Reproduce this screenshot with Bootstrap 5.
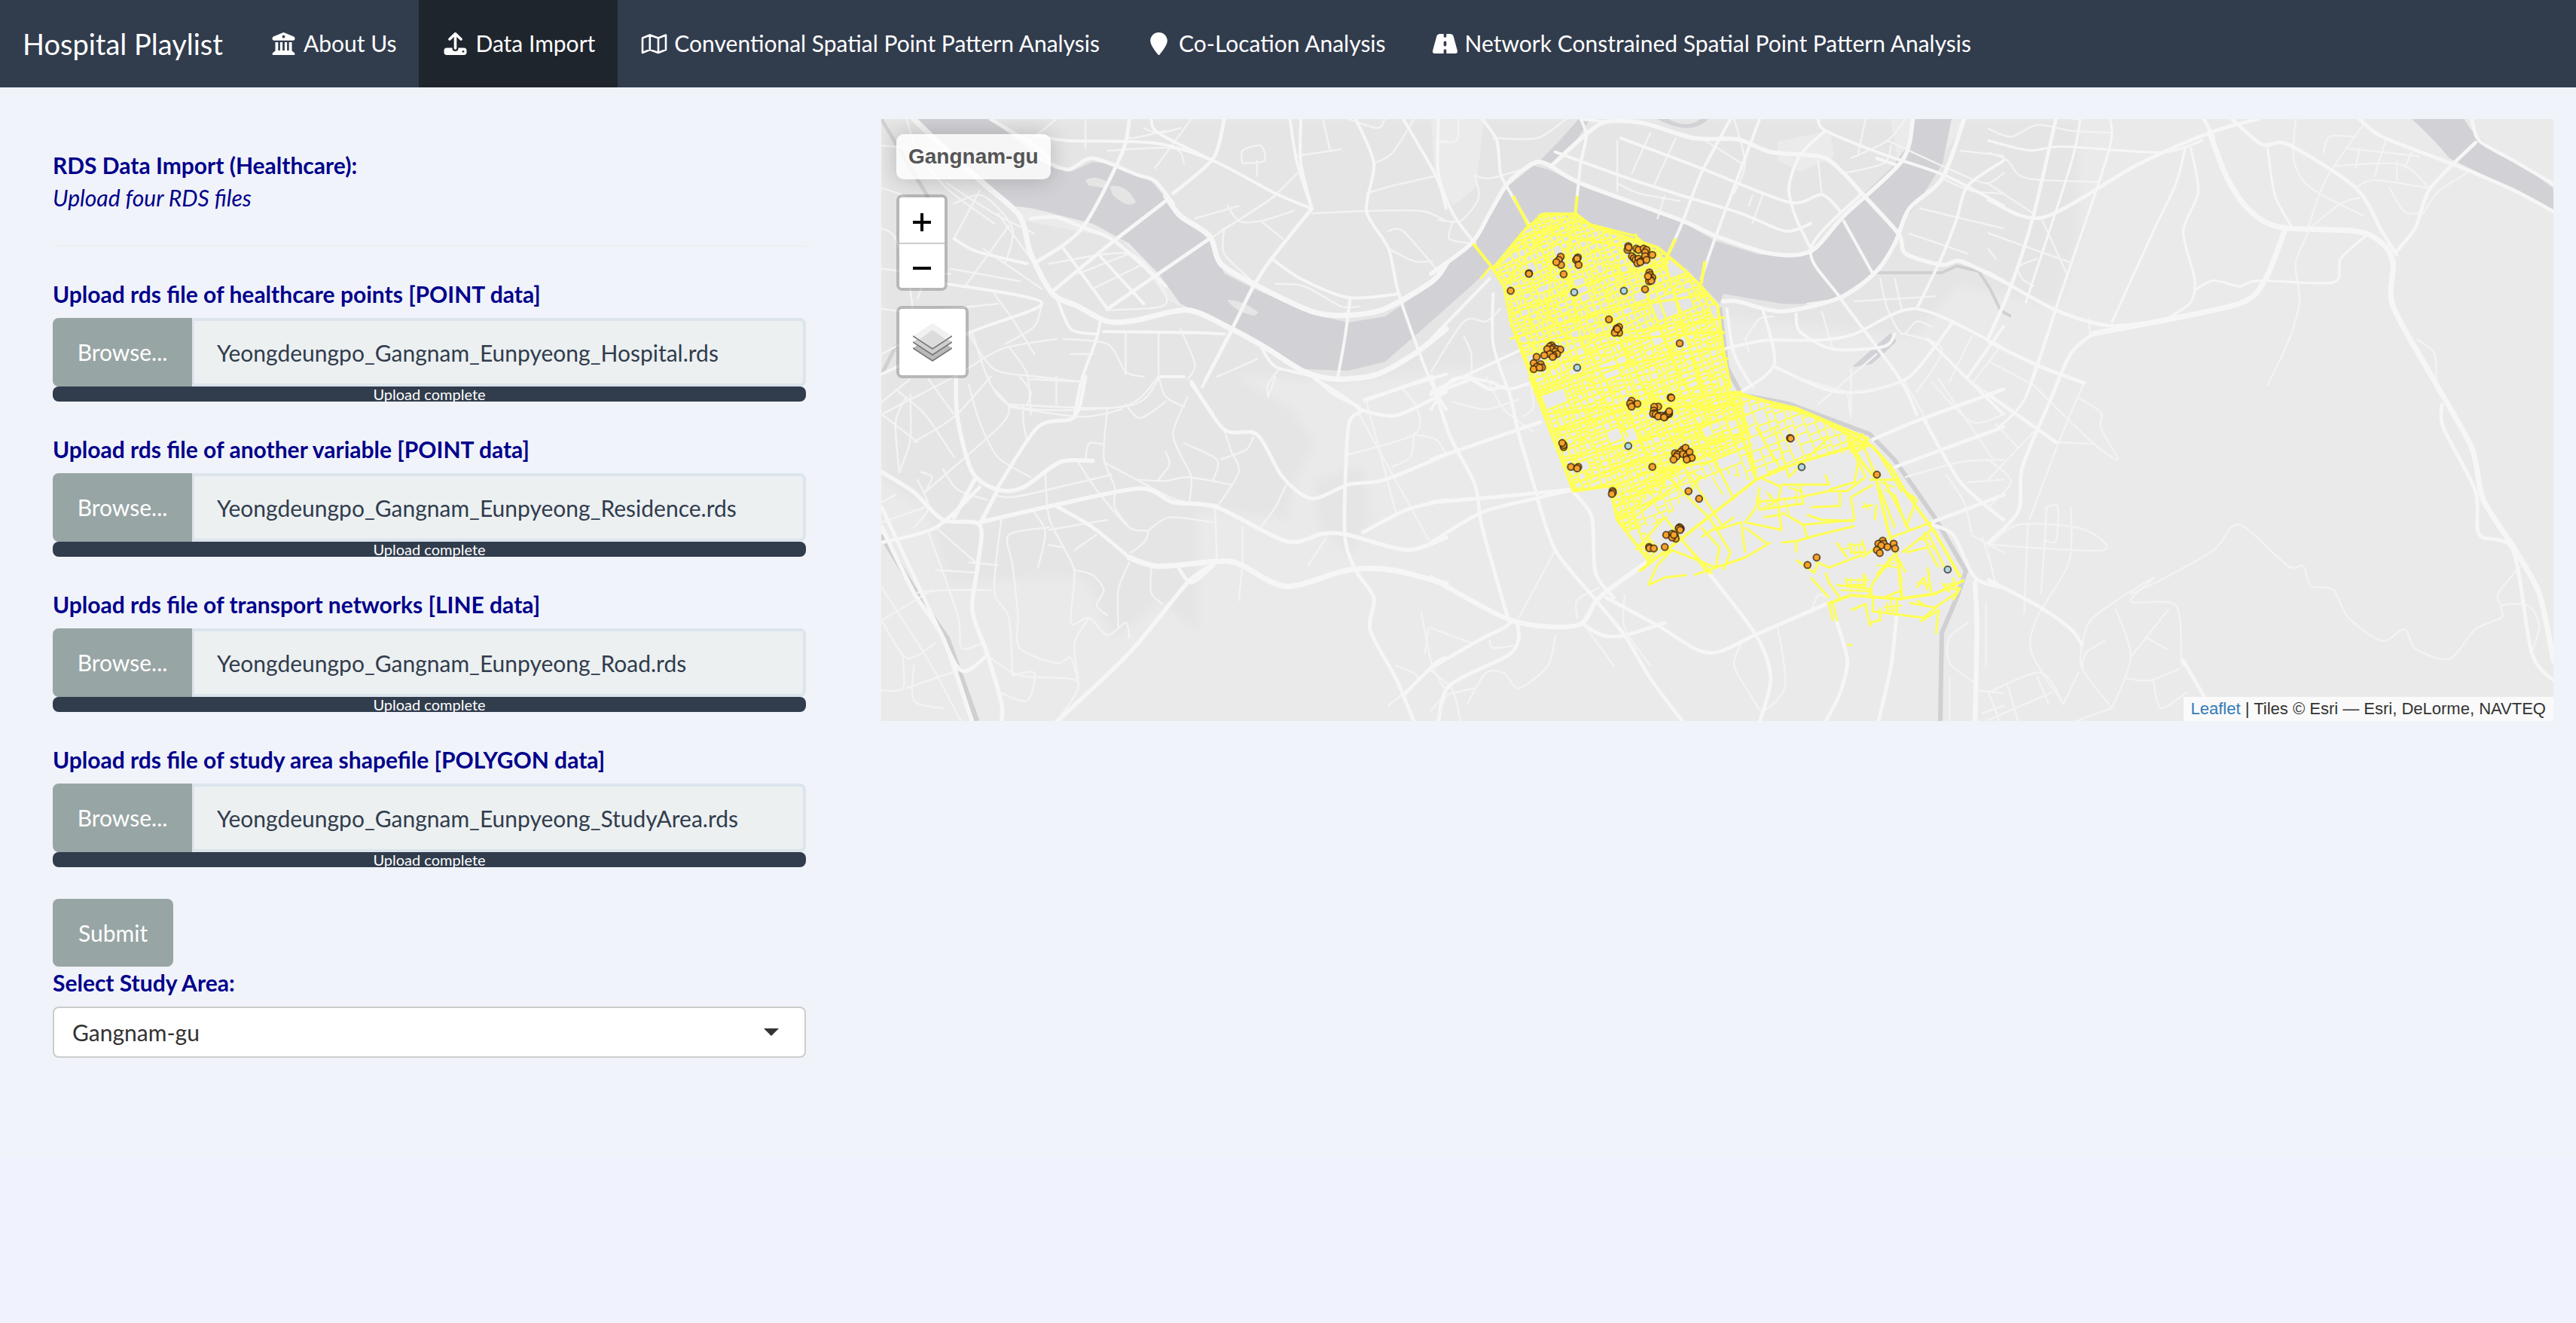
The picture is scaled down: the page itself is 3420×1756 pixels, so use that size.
<!DOCTYPE html>
<html lang="en">
<head>
<meta charset="utf-8">
<meta name="viewport" content="width=device-width, initial-scale=1">
<title>Hospital Playlist</title>
<link href="https://cdn.jsdelivr.net/npm/bootstrap@5.3.0/dist/css/bootstrap.min.css" rel="stylesheet">
<style>
:root{--ink:#313c4d;--ash:#98a5a5}
body{font-family:Lato,sans-serif;font-size:30px;line-height:43px;color:var(--ink);background:#f0f3fd}
.page-area{background:#f0f3f9;padding:42px 0 90px}
.topbar{background:var(--ink);padding:0;min-height:116px}
.topbar .navbar-brand{font-size:38px;line-height:44px;color:#fff;padding:36px 32px 36px 30px;margin:0}
.topbar .navbar-nav .nav-link{color:#fff;padding:36px 30px 37px;line-height:43px;display:flex;align-items:center;gap:8px;white-space:nowrap}
.topbar .navbar-nav .nav-link.active{background:#1f252d;color:#fff}
.topbar svg{width:37px;height:30px;fill:#fff;flex:none}
.side-col{padding:0 30px}
.side-panel{padding:40px}
.navy{color:#00008b}
.side-panel hr{margin:42px 0 41px;border-top:2px solid #ecf0f1;opacity:1}
.side-panel .form-label{font-weight:700;color:#00008b;margin:0 0 10px;padding:0;font-size:30px;line-height:43px;display:block}
.upload-group{margin-bottom:42px}
.ash-btn{background:var(--ash);color:#fff;border:0;border-radius:8px;font-size:30px;line-height:43px;padding:23px 34px;height:90px}
.ash-btn:hover{background:var(--ash);color:#fff}
.file-name,.file-name:focus{background:#ecf0f1;border:4px solid #dce4ec;border-radius:8px;color:var(--ink);font-size:30px;line-height:43px;padding:0 30px;height:91px;box-shadow:none}
.upload-group .input-group>.ash-btn{width:185px;height:91px;padding:24px 0;border-radius:8px 0 0 8px}
.upload-group .progress{height:20px;border-radius:8px;background:#ecf0f1;overflow:visible}
.upload-group .progress-bar{background:var(--ink);font-size:20px;line-height:20px;border-radius:8px;overflow:visible}
.area-select,.area-select:focus{height:68px;border:2px solid #ccc;border-radius:8px;color:#333;font-size:30px;line-height:43px;padding:0 24px;box-shadow:none;background:#fff url("data:image/svg+xml,%3csvg xmlns='http://www.w3.org/2000/svg' viewBox='0 0 20 10'%3e%3cpath fill='%23333' d='M0 0h20L10 10z'/%3e%3c/svg%3e") no-repeat right 34px top 27px/20px 10px}
.map-col{padding:0 30px}
.map-box{position:relative;height:799px;background:#eaeaea;overflow:hidden;font-family:"Liberation Sans",Arial,sans-serif}
.map-box>svg{display:block;width:100%;height:100%}
.map-tools{position:absolute;left:20px;top:20px;display:flex;flex-direction:column;align-items:flex-start;gap:20px}
.map-title{background:rgba(255,255,255,.8);border-radius:10px;box-shadow:0 0 30px rgba(0,0,0,.2);color:#555;font-weight:700;font-size:28px;line-height:36px;padding:12px 16px}
.tool-box{border:4px solid rgba(0,0,0,.2);border-radius:8px;background:#fff;background-clip:padding-box;display:flex;flex-direction:column;overflow:hidden}
.tool-box button{width:60px;height:60px;border:0;background:#fff;padding:6px 0 0;display:flex;align-items:center;justify-content:center}
.tool-box button+button{border-top:2px solid #ccc}
.tool-box .layer-btn{width:88px;height:88px;padding:0}
.map-credit{position:absolute;right:0;bottom:0;background:rgba(255,255,255,.75);color:#333;font-size:22px;line-height:32px;padding:0 10px}
.map-credit a{color:#337ab7;text-decoration:none}
</style>
</head>
<body>
<nav class="navbar navbar-expand topbar" aria-label="Main">
  <a class="navbar-brand" href="#">Hospital Playlist</a>
  <ul class="navbar-nav">
    <li class="nav-item"><a class="nav-link" href="#"><svg viewBox="0 0 37 30" aria-hidden="true"><path fill-rule="evenodd" d="M18.500 0L32 5.500Q33.500 6.200 33.500 8 33.500 10.800 31 10.800H6Q3.500 10.800 3.500 8 3.500 6.200 5 5.500ZM18.500 3.800a1.900 1.900 0 1 0 .01 0ZM7.500 13h3.800v11h2.600V13h3.200v11h2.800V13h3.200v11h2.600V13h3.800v11.500l2.600 2Q33.500 27.500 33.500 28.500 33.500 30 32 30H5Q3.500 30 3.500 28.500 3.500 27.500 4.900 26.500l2.600-2Z"/></svg>About Us</a></li>
    <li class="nav-item"><a class="nav-link active" aria-current="page" href="#"><svg viewBox="0 0 37 30" aria-hidden="true"><path d="M11 9L18.500 1.800 26 9M18.500 2.500V21" fill="none" stroke="#fff" stroke-width="3.600" stroke-linecap="round" stroke-linejoin="round"/><path fill-rule="evenodd" d="M7 20.500h7.500v.5a4 4 0 0 0 8 0v-.5H30A3.600 3.600 0 0 1 33.500 24v2.500A3.600 3.600 0 0 1 30 30H7A3.600 3.600 0 0 1 3.500 26.500V24A3.600 3.600 0 0 1 7 20.500ZM29 23.900a1.400 1.400 0 1 0 .01 0Z"/></svg>Data Import</a></li>
    <li class="nav-item"><a class="nav-link" href="#"><svg viewBox="0 0 37 30" aria-hidden="true"><path d="M3 7.500L12.800 3.500 24 7.500 34 3.500V23L24 27 12.800 23 3 27ZM12.800 3.500V23M24 7.500V27" fill="none" stroke="#fff" stroke-width="2.600" stroke-linejoin="round"/></svg>Conventional Spatial Point Pattern Analysis</a></li>
    <li class="nav-item"><a class="nav-link" href="#"><svg viewBox="0 0 37 30" aria-hidden="true"><path d="M18.500 0A11.300 11.300 0 0 0 7.200 11.300C7.200 16.500 14 25.500 17.200 29.300a1.700 1.700 0 0 0 2.600 0C23 25.500 29.800 16.500 29.800 11.300A11.300 11.300 0 0 0 18.500 0Z"/></svg>Co-Location Analysis</a></li>
    <li class="nav-item"><a class="nav-link" href="#"><svg viewBox="0 0 37 30" aria-hidden="true"><path d="M11.500 2H16.700V5.500Q16.700 6.800 18.500 6.800 20.300 6.800 20.300 5.500V2H25.500Q28.500 2 29.500 4.500L34.800 24Q35.800 28 32 28H20.300V24Q20.300 22.200 18.500 22.200 16.700 22.200 16.700 24V28H5Q1.200 28 2.200 24L7.500 4.500Q8.500 2 11.500 2Z"/><rect x="16.700" y="11.500" width="3.600" height="7" rx="1.800" fill="#313c4d"/></svg>Network Constrained Spatial Point Pattern Analysis</a></li>
  </ul>
</nav>

<main class="page-area">
  <div class="row g-0">
    <div class="col-4 side-col">
      <form class="side-panel" onsubmit="return false">
        <div class="navy fw-bold">RDS Data Import (Healthcare):</div>
        <div class="navy fst-italic">Upload four RDS files</div>
        <hr>
        <div class="upload-group">
          <label class="form-label" for="f1">Upload rds file of healthcare points [POINT data]</label>
          <div class="input-group">
            <button class="btn ash-btn" type="button">Browse...</button>
            <input class="form-control file-name" id="f1" type="text" readonly value="Yeongdeungpo_Gangnam_Eunpyeong_Hospital.rds">
          </div>
          <div class="progress"><div class="progress-bar w-100">Upload complete</div></div>
        </div>
        <div class="upload-group">
          <label class="form-label" for="f2">Upload rds file of another variable [POINT data]</label>
          <div class="input-group">
            <button class="btn ash-btn" type="button">Browse...</button>
            <input class="form-control file-name" id="f2" type="text" readonly value="Yeongdeungpo_Gangnam_Eunpyeong_Residence.rds">
          </div>
          <div class="progress"><div class="progress-bar w-100">Upload complete</div></div>
        </div>
        <div class="upload-group">
          <label class="form-label" for="f3">Upload rds file of transport networks [LINE data]</label>
          <div class="input-group">
            <button class="btn ash-btn" type="button">Browse...</button>
            <input class="form-control file-name" id="f3" type="text" readonly value="Yeongdeungpo_Gangnam_Eunpyeong_Road.rds">
          </div>
          <div class="progress"><div class="progress-bar w-100">Upload complete</div></div>
        </div>
        <div class="upload-group">
          <label class="form-label" for="f4">Upload rds file of study area shapefile [POLYGON data]</label>
          <div class="input-group">
            <button class="btn ash-btn" type="button">Browse...</button>
            <input class="form-control file-name" id="f4" type="text" readonly value="Yeongdeungpo_Gangnam_Eunpyeong_StudyArea.rds">
          </div>
          <div class="progress"><div class="progress-bar w-100">Upload complete</div></div>
        </div>
        <button class="btn ash-btn d-block" type="submit">Submit</button>
        <label class="form-label" for="area">Select Study Area:</label>
        <select class="form-select area-select" id="area"><option>Gangnam-gu</option></select>
      </form>
    </div>
    <div class="col-8 map-col">
      <div class="map-box">
        <svg id="map" viewBox="0 0 2220 799" preserveAspectRatio="xMidYMid slice" role="img" aria-label="Map of Gangnam-gu">
          <defs>
            <filter id="haze" x="-10%" y="-10%" width="120%" height="120%"><feGaussianBlur stdDeviation="6"/></filter>
            <clipPath id="core"><path d="M810 199L856 145 875 125H919L943 142 1030 172 1089 222 1108 245 1118 309 1127 359 1142 375 1152 409 1132 442 1079 455 1045 478 1000 520 1010 545 1035 570 1018 589 977 529 967 487 919 494 880 392 834 255 827 225Z"/></clipPath>
            <clipPath id="fringe"><path d="M1105 350L1142 370 1196 381 1250 402 1305 430 1300 442 1240 448 1225 458 1162 482 1120 470 1090 480 1036 536 990 545 1020 470Z"/></clipPath>
          </defs>
          <g id="base" fill="#e5e5e5" filter="url(#haze)">
            <path d="M0 0H1590V160L1560 250 1430 220 1370 290 1100 260 780 330 600 350 470 340 545 385 575 430 545 490 540 530 420 520 420 680 370 640 310 690 270 610 180 610 90 620 60 520 0 480Z"/>
            <path d="M575 480L640 460 650 530 620 580 580 540Z"/>
          </g>
          <path fill="#ebebeb" d="M730 0H800L790 90 760 115 735 80ZM1190 30L1260 15 1265 50 1220 70 1190 55ZM1340 0H1440L1360 130 1350 60ZM180 115Q260 125 330 160 400 220 410 255L380 240 320 160 190 135Z"/>
          <g fill="#d2d2d6">
            <path d="M145 0L198 42 230 66 252 70 281 57 300 59 337 75 358 82 378 105 392 129 417 142 446 172 455 205 494 225 572 259 620 270 669 262 727 222 750 189 783 165 808 125 832 89 866 62 885 67 929 87 1064 137 1108 162 1166 180 1234 179 1268 142 1302 102 1341 65 1365 32 1370 0H1421L1409 59 1380 105 1350 145 1346 172 1317 205 1273 235Q1240 248 1195 245L1118 232 1113 245 1069 199 992 159 924 132 880 125 856 145 808 199 749 252 707 289 669 322 620 334 562 332 499 299 465 279 397 245 368 205 329 165 281 139 203 119 174 115 135 79 87 42 43 0Z"/>
            <path d="M872 58L903 26 926 0H958L940 2 915 40 894 62ZM1030 0Q1075 24 1098 0H1088Q1070 14 1045 0Z"/>
            <path d="M2032 0H2102Q2115 30 2186 66L2220 92V123Q2160 90 2082 52 2060 25 2032 0ZM1290 328L1340 284 1348 295 1330 312 1315 325 1292 329Z"/>
          </g>
          <path fill="#e5e5e5" d="M271 81Q285 74 301 84L298 92 275 88ZM303 89Q325 85 338 110 330 120 308 102ZM459 240Q480 240 501 257L495 261Q470 256 459 240Z"/>
          <g fill="none" stroke="#d0d0d3" stroke-width="7" stroke-linejoin="round">
            <path d="M1113 250L1123 330 1142 366 1205 378 1312 418 1345 452 1398 528 1440 600 1428 635 1408 682 1406 799" stroke-width="6"/>
            <path d="M0 552L50 635 88 690 127 799"/>
            <path d="M1322 204H1408L1428 195 1457 202 1472 225 1486 254 1500 262" stroke-width="4"/>
            <path d="M0 0L60 100 80 150M20 300L0 340" stroke-width="5"/>
          </g>
          <g id="roads" fill="none" stroke="#f6f6f6" stroke-linecap="round" stroke-linejoin="round"></g>
          <g id="streets" fill="none" stroke="#ffff55" stroke-linejoin="round"></g>
          <g id="points" stroke="#2b1d08" stroke-opacity=".7" stroke-width="2"></g>
        </svg>
        <div class="map-tools">
          <div class="map-title">Gangnam-gu</div>
          <div class="tool-box">
            <button type="button" aria-label="Zoom in"><svg width="26" height="26" viewBox="0 0 26 26"><path d="M1 13H25M13 1V25" stroke="#000" stroke-width="4"/></svg></button>
            <button type="button" aria-label="Zoom out"><svg width="26" height="26" viewBox="0 0 26 26"><path d="M1 13H25" stroke="#000" stroke-width="4"/></svg></button>
          </div>
          <div class="tool-box">
            <button class="layer-btn" type="button" aria-label="Layers"><svg width="52" height="52" viewBox="0 0 52 52"><path d="M0 34L26 17 52 34 26 51Z" fill="#b9b9b9"/><path d="M0 34L26 51 52 34" fill="none" stroke="#777" stroke-width="1.500"/><path d="M0 26L26 9 52 26 26 43Z" fill="#cfcfcf"/><path d="M0 26L26 43 52 26" fill="none" stroke="#777" stroke-width="1.500"/><path d="M0 18L26 1 52 18 26 35Z" fill="#f1f1f1"/><path d="M9 22L26 10 43 22 26 34Z" fill="#dcdcdc"/><path d="M0 18L26 35 52 18" fill="none" stroke="#777" stroke-width="1.500"/></svg></button>
          </div>
        </div>
        <div class="map-credit"><a href="#">Leaflet</a> | Tiles © Esri — Esri, DeLorme, NAVTEQ</div>
      </div>
    </div>
  </div>
</main>
<script src="https://cdn.jsdelivr.net/npm/bootstrap@5.3.0/dist/js/bootstrap.bundle.min.js"></script>
<script>
// Each survey sheet has its own grid: origin and scale on the map.
const sheets = {
  A: [-10, -8, .4847, .3333],
  B: [730, -8, .4847, .3333],
  C: [730, 342, .4847, .3333],
  D: [-10, 342, .4847, .3333],
  E: [1470, -8, .4974, .523]
};
const NS = 'http://www.w3.org/2000/svg';
function place(s, str) {
  const n = str.trim().split(/[ ,]+/).map(Number), [ox, oy, sx, sy] = sheets[s], out = [];
  for (let i = 0; i < n.length; i += 2) out.push([ox + n[i] * sx, oy + n[i + 1] * sy]);
  return out;
}
function curve(p) {
  let d = 'M' + p[0].map(v => v.toFixed(1));
  for (let i = 0; i < p.length - 1; i++) {
    const a = p[i - 1] || p[i], b = p[i], c = p[i + 1], e = p[i + 2] || c, k = 7;
    d += 'C' + [b[0] + (c[0] - a[0]) / k, b[1] + (c[1] - a[1]) / k, c[0] - (e[0] - b[0]) / k, c[1] - (e[1] - b[1]) / k, c[0], c[1]].map(v => v.toFixed(1));
  }
  return d;
}
function draw(parent, d, w, extra) {
  const el = document.createElementNS(NS, 'path');
  el.setAttribute('d', d); el.setAttribute('stroke-width', w);
  for (const k in extra || {}) el.setAttribute(k, extra[k]);
  parent.appendChild(el);
}
const roads = {
A: {
 9: ['110,24 200,150 300,280 400,410 430,560 490,720 560,770 640,830 720,825 860,785 980,860 1080,940 1180,1030 1270,1060 1380,1040 1480,960 1568,860',
     '800,330 840,410 920,490 950,600 1040,680 1200,790 1300,805 1400,780 1530,670 1568,600'],
 6: ['440,170 530,225 600,180 720,245 770,270 820,360','430,420 500,415 580,460 660,510 800,690','320,24 440,130 480,180',
     '800,350 640,530 490,710','920,500 640,780','1200,380 1090,580 1040,690 985,850 910,1060','960,24 930,180 820,320','700,24 680,160 570,460 450,590'],
 5: ['1140,24 1160,200 1200,380','1170,24 1170,200 1200,380','1320,24 1370,200 1350,390 1410,540 1440,730 1520,1050 1568,1180','1090,580 1170,660 1300,735 1440,720','1305,740 1290,900 1270,1060',
     '450,90 530,110 770,120 930,190 1100,320 1200,380','760,24 780,80 930,190','1450,24 1540,250 1568,380','220,500 280,550 420,600','620,830 610,900 570,1060 550,1200','980,870 900,1090',
     '515,530 640,780','620,570 740,760','870,1080 930,1200','780,1050 850,1050','200,680 460,755 270,870 22,1040','500,730 540,860 610,880','1060,930 1100,1010 1200,1050 1260,1120 1330,1170','1345,1140 1568,1040','960,880 880,875 630,870'],
 3: ['1200,400 1350,390 1500,390 1568,430','1160,170 1280,145','1350,320 1420,290 1540,250','1370,200 1420,160 1480,24','870,24 770,220','740,60 780,80 840,60','1100,330 880,540 800,620','1160,240 1080,350 950,470','480,600 700,560 790,700 790,770 640,785','560,640 700,560','600,700 740,600',
     '580,24 580,140','500,24 420,120','22,130 200,150','220,360 300,330 380,460 360,600','290,310 220,500','200,280 330,400 440,480','370,450 250,690','340,400 440,600','210,620 400,670','90,24 120,150 200,300 330,440',
     '330,720 380,820 440,960','460,760 440,850 360,920','520,900 640,920 690,1030 740,1050','690,870 690,1040','780,880 780,1040','840,860 880,1000 860,1060','540,960 600,960','260,880 330,1020 450,1050 570,1070','22,1200 220,1050 350,940 500,900','22,960 100,880 100,700 60,500 22,460',
     '270,880 370,1160 700,1165 780,1060','370,930 420,1040 430,1200','1080,1130 1080,1080 1110,1020','940,1050 1050,980','1010,200 1010,150 1060,130 1070,190 1010,200','1050,190 1050,250','1000,370 880,420','970,370 1000,430 1060,430 1150,390','1120,500 1060,430','1410,470 1450,470 1540,620','1410,540 1480,590 1530,590','1100,680 1180,690 1280,770 1330,770','960,460 960,560 1030,660','460,700 380,620 300,540','700,40 700,100 800,70','1540,120 1568,110','1230,24 1250,150','1300,24 1380,60 1400,24','850,200 820,140 640,150','22,300 80,330 140,420 160,560 120,740','22,620 140,640 210,640','22,780 120,790 340,760'],
},
B: {
 7: ['0,640 110,520 160,400 210,280 280,200 320,205 410,280 690,430 780,490 930,560 1040,550 1130,410 1290,190 1320,24','1460,24 1400,260 1310,380 1270,520 1220,630 1120,735 960,790 840,750 800,750',
     '330,210 420,90 480,35 580,40 720,100 840,105 930,155 1070,175 1130,240 1180,320 1280,480 1300,560 1400,605 1450,590 1568,670'],
 5: ['480,35 410,24','410,24 425,90 410,200 400,330','520,100 740,220 980,355 1070,325 1120,390','140,24 180,110 190,240 210,300 270,450','340,155 520,250 690,330 850,400 970,470 1040,440','820,24 740,240 690,430 650,560',
     '900,24 780,490 740,660','1060,24 1080,70 1230,160 1410,250 1568,370','1080,70 1010,170 980,300 1000,420 1040,540','1180,320 1040,540 1120,735 1280,1050 1330,1200','1130,430 1210,640','1220,180 1280,210',
     '800,940 920,905 1060,905 1160,880 1330,780 1560,930','1330,780 1400,570 1440,420 1470,290 1568,190','20,24 20,240 60,400 120,520','0,900 160,660','0,1110 280,920','0,1180 60,1060 160,1070 210,1100 280,1070','210,1100 170,920 170,720',
     '850,1110 940,1000 910,790','940,1010 1080,1100 1180,1110 1300,1060 1370,950 1430,830','1000,800 1010,870 1100,940 1240,930 1270,880','1360,900 1470,1060 1568,1200','810,780 830,960 880,1090','1470,1050 1568,850'],
 3: ['20,115 70,110 75,24','170,100 290,100 370,24','120,250 160,260 260,220','120,250 130,340 80,430 20,425','60,430 50,500 110,520','510,110 510,310','600,80 550,240','740,100 850,200','830,24 860,200 830,320','670,100 610,290','880,330 870,370','910,320 880,440','640,330 620,420','510,280 570,320 680,350','1150,180 1250,110 1300,24','1170,160 1190,24','1130,240 1240,200 1260,130','1070,320 1060,190','1250,110 1430,230 1520,280 1568,240','1450,150 1568,170','1400,260 1480,310 1568,320','1340,380 1568,460','1310,480 1470,560','1070,790 1100,940','1230,660 1250,780 1290,880 1330,830 1370,850','1270,660 1290,790','1160,750 1380,730','860,900 900,820 940,810','860,900 870,950','1150,1020 1150,1200','1220,960 1060,1160','1300,880 1400,940 1330,1110','0,1030 90,830 150,830 190,780','90,890 110,960 110,1060','1120,740 1030,760','1560,930 1480,1080','1480,890 1420,1070'],
},
C: {
 8: ['1490,1375 1495,1000 1490,820','0,800 220,970 400,990 460,880 590,740'],
 6: ['0,660 140,540 300,480 390,450','0,330 300,180','0,500 170,480 380,450','290,480 340,690 440,870 530,1030 600,1200 690,1375','100,0 160,50 210,50 240,230 290,470','0,0 50,230 120,430 140,600 210,960',
     '0,70 110,10','480,880 620,990 760,1100 900,1020 1090,900','760,780 890,1030 930,1200 900,1375','1110,970 1140,1130 1120,1260 1080,1375','1275,950 1260,1150 1225,1375','390,460 440,560 450,780 500,880','420,990 470,1030 530,1030 640,980',
     '1210,250 1340,170 1568,50','1350,170 1450,420 1568,570','1370,580 1480,520 1568,470','1370,590 1430,630 1490,800 1568,840','0,1160 130,1050 200,1000 230,970 240,1040 210,1110 50,1230 20,1375','1270,360 1568,200'],
 3: ['340,690 240,960','150,0 200,130 280,220','340,1030 320,1150 240,1240 200,1180 150,1180 100,1300','530,870 530,1000 600,1150','430,1010 500,1150','850,1060 830,1150 880,1280 910,1330 970,1230 950,1000','1470,980 1420,1040 1420,1140 1490,1220','1420,1200 1420,1375','1000,0 1150,60 1300,20','1150,160 1140,60','1360,180 1300,30','1370,20 1480,180 1568,150','1390,10 1540,330','1480,20 1568,110','1300,400 1450,340 1568,330','1410,390 1460,500 1480,620','1470,420 1568,410','1480,630 1568,700','1510,640 1540,780','1500,1250 1568,1260','1510,1340 1568,1310','1520,900 1520,1150','400,960 400,890 460,840','250,160 280,120 270,0','0,1000 110,1060','160,1050 170,1080 230,1070','1040,940 1060,870 1090,880','60,100 150,130 240,90','0,1170 60,1250 80,1375','0,1330 40,1270 120,1240'],
},
D: {
 9: ['700,720 780,755 940,735 1000,745 1130,835 1300,770 1420,770 1568,825'],
 7: ['225,0 230,170 270,380 340,450 410,440 510,340 600,335','500,1375 700,1100 860,820 930,750','290,580 500,510 730,445 820,500 940,520 1130,655 1230,625 1300,630 1460,690 1568,640','280,400 220,560','280,1375',
     '22,380 110,460 190,570 290,590 285,750 270,930 310,1100 350,1300 350,1375','340,450 290,590','22,600 110,860 190,1040 270,1375'],
 6: ['340,440 450,200 550,160 580,0','500,515 600,600 700,720','870,20 960,210 1050,230 1120,400 1200,485 1300,430 1400,410 1568,310','1210,10 1330,130 1300,200 1290,620 1320,770 1370,880 1360,1010 1430,1200 1480,1375','1330,130 1430,155 1568,60','1345,95 1530,0','22,660 170,600 290,440','1340,620 1460,530 1568,490','22,520 170,980 240,1170 310,1110','830,750 870,820 930,750','1450,1270 1540,1140 1568,1120'],
 3: ['22,100 100,10','60,50 140,150 220,320','90,80 60,180 70,380','150,10 220,150','22,150 120,260','100,70 100,250 70,380','110,260 220,160 320,0','130,380 160,400 140,460','190,370 230,450 310,490','260,30 290,180 340,320 430,400','330,50 370,120 350,190 220,360 140,460','370,110 680,120 780,0','410,120 410,180 420,260','370,120 570,160 680,130','640,130 630,320 660,440 660,520 700,600','690,110 730,165 800,100','780,0 800,80 850,120','860,80 820,220 840,310 870,400 865,500','850,265 940,330 930,410','950,330 1020,290 1040,240','960,210 980,300 1000,380 940,520','720,410 800,415 860,400 980,430','800,300 810,350 780,410','1130,430 1100,520 1060,600','630,340 720,410 830,490 940,510','560,340 610,450 700,600 750,615 740,660 705,700','750,615 810,560 930,580','935,530 940,730','1010,600 1010,740 1000,890','340,475 400,475 650,390','470,390 480,560 520,680 550,780 540,980 590,960 640,1030 690,980 700,1040','480,600 370,630 380,750 395,940 400,1080 500,1140 540,1120 560,1220','350,560 330,850 370,960 380,1190','440,540 470,620 450,760','480,670 520,680','550,770 600,790 630,850 610,910 640,950','700,740 670,850 670,1000','760,760 760,860 790,905','480,610 640,570','610,630 550,690','400,0 430,60 420,110','500,0 500,110','430,10 580,20','580,330 590,265 630,270','1080,80 1100,0','1330,150 1520,650','1350,100 1430,540','1450,50 1490,130 1480,230 1300,310','1480,230 1540,250 1568,310','1480,230 1470,320 1420,360','1190,750 1240,640','170,770 280,780','120,860 200,850 320,850','260,740 340,750','170,600 280,740','22,840 150,1130 240,1375','150,620 230,950 240,1080 300,1060','22,970 160,850','22,970 90,1120 170,1060','80,1120 80,1240 22,1250','90,1240 230,1170','350,1260 420,1290 440,1180 380,1190','310,1110 400,1190 560,1215 500,1375','560,1200 550,1060 590,960','1500,940 1530,1150 1568,1250','1520,1000 1510,1100','1410,1310 1490,1200 1430,1150','1540,1375 1568,1270','22,500 60,470','22,580 140,520','120,410 150,520 110,600','110,1150 110,1290 190,1320'],
},
E: {
 9: ['590,50 640,170 700,250 780,290 980,300 1050,330 1080,380 1080,490 1190,680 1290,850 1320,980 1400,1100 1470,1220 1508,1390','280,560 500,520 680,480 740,420 790,300'],
 6: ['0,220 145,265 400,130 590,50 720,15','0,405 180,500 330,540 500,520','1508,250 1400,195 1240,130 1050,60 990,15','1290,15 1310,70 1400,120 1508,180','575,15 600,60','650,15 730,80 800,80 980,190 1050,300 1090,360','1090,350 1140,290 1180,190 1300,75',
     '180,15 120,260 60,440 0,570','0,580 130,640 255,685','280,560 220,610 160,740 90,900 80,1010 0,1090','0,715 180,835','1210,740 1215,800 1300,960 1310,1070 1400,1110 1450,1370 1508,1440','0,1185 130,1250 220,1310 250,1350','520,1390 575,1480'],
 4: ['325,15 320,100 200,440 100,720','245,15 220,130 100,480','180,500 100,720 25,800','550,450 600,425 670,440 720,425 920,430 940,370 1010,310','330,530 440,300 500,180 525,90','540,90 560,200 520,300 550,420 540,480 480,520','745,90 765,210 810,290','240,15 100,0','0,70 110,95 200,85 460,100 570,70'],
 3: ['0,180 120,255','0,40 60,60 130,30 220,45 325,50','0,100 50,120 100,165 290,175','0,305 220,380','0,345 20,370','140,265 210,410','130,370 80,390 90,420 120,440','270,520 270,570','820,15 815,120 860,190 1000,260','850,300 900,170 1000,30','860,290 940,230 990,215','920,135 1100,130 1180,195','980,190 1030,170 1170,190','1070,190 1110,250 1160,255','990,90 980,140','1060,70 1030,160','1090,120 1090,170','1130,100 1110,140','860,290 820,380 830,480 800,580 745,690','895,100 910,60 980,60','960,90 1150,110','1160,255 1200,200 1280,150',
     '120,690 270,830 345,880 300,800 300,760 235,720','0,630 120,690','180,835 280,840','255,685 190,830 110,1030','0,880 60,935 0,1000','20,790 80,850','120,810 0,930','0,1100 80,1045 250,1055 305,1110 0,1095','220,1000 215,1140 130,1280 115,1370 200,1500','105,1045 95,1270','155,1000 150,1090 140,1220','155,1000 185,1000 180,1085 150,1085','250,1350 280,1280 440,1180 380,1240 500,1250 515,1390 520,1400','380,1220 460,1185 600,1110 650,1050 690,1055 800,1150 840,1150 860,1200 920,1210 960,1280 1050,1340 1110,1310 1140,1360 1230,1385 1300,1310 1370,1280 1370,1250 1440,1250 1470,1300 1450,1370','1370,1250 1360,1220 1420,1150','340,1260 380,1380 330,1510','380,1380 480,1260','420,1330 475,1360','370,1435 430,1440 510,1410','440,1440 460,1510 530,1470','250,1350 250,1410 330,1510','0,1470 140,1420 200,1500','0,1540 170,1470','50,1450 80,1545','130,1430 160,1500','310,1340 260,1370 250,1410','200,1500 240,1420','330,1510 230,1545','0,1470 30,1545','1145,575 1190,610 1195,690','0,1120 20,1200']
}};
const roadLayer = document.getElementById('roads');
for (const s in roads) for (const w in roads[s]) for (const line of roads[s][w]) {
  if (line.split(' ').length < 2) continue;
  draw(roadLayer, curve(place(s, line)), Math.max(2, w * .8), w < 4 ? {stroke: '#f3f3f3'} : {});
}

// Street network: blocks split again and again along the two grid directions.
let seed = 7;
const rnd = () => (seed = (seed * 16807) % 2147483647) / 2147483647;
const streets = document.getElementById('streets');
function network(clip, min, stop, width, angle, cx, cy, size) {
  let d = '';
  (function split(x, y, w, h, depth) {
    if ((w < min * 2 && h < min * 2) || (depth > 9 && rnd() < stop)) return;
    const t = .35 + rnd() * .3, j = (rnd() - .5) * 3;
    if (w > h * (.8 + rnd() * .5)) {
      const m = w * t; d += `M${(x + m + j).toFixed(1)} ${y.toFixed(1)}L${(x + m).toFixed(1)} ${(y + h).toFixed(1)}`;
      split(x, y, m, h, depth + 1); split(x + m, y, w - m, h, depth + 1);
    } else {
      const m = h * t; d += `M${x.toFixed(1)} ${(y + m + j).toFixed(1)}L${(x + w).toFixed(1)} ${(y + m).toFixed(1)}`;
      split(x, y, w, m, depth + 1); split(x, y + m, w, h - m, depth + 1);
    }
  })(-size, -size, size * 2, size * 2, 0);
  const g = document.createElementNS(NS, 'g');
  g.setAttribute('clip-path', `url(#${clip})`);
  draw(g, d, width, {transform: `translate(${cx} ${cy}) rotate(${angle})`});
  streets.appendChild(g);
}
network('core', 5, .06, 2.7, -21, 980, 340, 360);
network('fringe', 8, .2, 2, -21, 1180, 440, 220);
const yellow = {
B: {
 4: ['225,330 270,460','400,330 395,400 440,450','115,520 170,620 200,690 220,840 290,1110 310,1200','170,620 260,460 310,402 395,402 440,450 620,535 690,620 740,690 785,770 800,940 820,1095','670,500 640,590','750,590 740,680'],
 3: ['135,660 165,610','180,610 270,490 400,430 560,490 650,600','200,690 330,440','270,490 330,600 320,800 380,900','395,400 370,600 410,900 500,1120','220,800 460,660 640,600','215,900 500,780 760,720','560,480 600,760 700,1100','640,590 700,900 760,1180','240,920 500,880 790,820','270,1040 540,900 800,870','330,480 520,530 640,620','790,815 805,815','790,875 805,875','800,978 815,978','480,700 500,850 620,1200','290,1110 460,1020 800,930'],
},
C: {
 4: ['270,0 390,455 490,435 510,570 600,740','570,775 690,640 890,410 1000,345 1140,285 1200,265','890,410 870,320 800,0','930,120 1000,130 1080,180 1180,260','830,60 960,115 1060,165 1150,235 1210,280 1260,360 1300,460 1330,490','820,65 1000,125 1200,250','1140,280 1180,230 1200,270 1160,300','1085,905 1150,870 1280,885 1380,865 1460,810','1300,460 1380,620 1450,800','1140,240 1180,340 1220,410 1250,600 1280,740 1290,890'],
 3: ['310,150 850,60','330,220 540,130 860,110','365,335 700,200 870,150','380,430 560,340 830,240','490,440 600,380 760,340 880,270','500,520 640,400 700,350','520,600 700,400','530,120 600,330 760,560','430,0 540,240','600,60 690,350 800,600','700,100 830,490','845,80 890,390','510,570 620,480 640,420','560,690 640,560','640,560 760,785','680,640 770,785','590,740 660,690 780,760 860,720','595,830 640,800 700,790','720,790 860,720 930,660','660,690 620,750 595,830','760,560 780,600 740,640','830,560 780,610 850,580 860,700','860,580 960,610 950,500','900,440 890,520 860,580','890,500 1010,480 1090,455 1140,455 1190,400','900,480 900,530 1020,505','960,430 1090,430 1080,390','960,430 950,500','940,200 980,400 1020,340 1090,240','890,200 950,350','900,400 960,440','1010,430 1020,510','920,460 940,500','1040,520 1120,515 1120,460','1030,550 1070,570 1160,575','960,540 1020,590 1160,570','1160,570 1150,480 1210,430','1160,595 1060,630 1000,655 960,660','1000,655 1000,700','860,600 920,665','1020,590 1030,640','910,560 960,550','1200,410 1280,410','1220,410 1270,600','1240,410 1310,610','1260,640 1370,580','1270,470 1300,590','1330,490 1300,600','1220,510 1215,570','1180,520 1210,510','1180,260 1220,400','1220,290 1290,460','1150,280 1190,400','1360,620 1410,770','1290,700 1370,610','1300,700 1360,680 1390,760','1360,760 1370,860','1040,800 1090,880','1000,730 1050,780 1060,740 1090,760 1180,710','1080,780 1090,820 1120,880','1110,660 1140,720','1150,660 1150,700 1190,700 1180,650','1110,830 1200,845 1210,880','1135,800 1140,830 1190,830 1190,790','1200,870 1210,820 1260,730','1220,790 1280,690','1270,700 1300,780','1330,840 1350,800 1360,850','1400,820 1420,860','1430,800 1440,860 1380,920 1310,900','1150,930 1190,905 1200,980 1230,970 1230,920','1200,980 1205,995','1210,880 1210,935 1350,960 1390,910','1250,900 1250,940','1275,890 1275,950','1330,890 1350,910','1340,975 1390,930 1383,1025','1100,900 1112,975','1090,900 1100,970','1140,1068 1153,1068','1170,340 1160,420 1090,450','1430,890 1450,840','1290,850 1240,880','740,600 790,680 780,760','770,580 820,700 800,770','1200,700 1250,640','1210,690 1180,720'],
 2: ['1160,670 1160,710','1170,660 1175,710','1140,670 1180,670','1140,810 1200,810','1150,800 1150,860','1170,800 1170,860','1185,780 1185,860','1120,850 1210,855','1220,750 1280,760','1230,770 1270,740','1250,720 1290,740','1240,920 1290,910','1245,935 1280,925','1260,890 1265,945','1340,640 1390,700','1350,620 1360,680','1340,650 1370,640','1400,830 1450,820','1410,850 1450,840','930,470 940,520','970,490 980,550','1000,430 1000,510','980,440 1020,460','910,520 960,490','920,500 930,520','1290,800 1285,870','710,380 740,400 720,430','740,390 700,470','770,400 800,470','1230,420 1270,440','1240,450 1270,470','1185,500 1200,530','1120,690 1150,680','1330,820 1370,830']
}};
for (const s in yellow) for (const w in yellow[s]) for (const line of yellow[s][w]) {
  const p = place(s, line);
  draw(streets, 'M' + p.map(q => q[0].toFixed(1) + ' ' + q[1].toFixed(1)).join('L'), w);
}

// Facilities (orange) and residences (light blue).
const hospitals = {
B: '540,530 538,545 541,535 562,540 568,545 582,540 590,545 586,555 606,565 550,570 555,578 560,585 568,580 575,590 565,598 573,594 586,570 590,585 598,635 600,645 606,655 600,660 597,670 603,668 594,650 586,702 355,572 350,585 356,605 343,594 402,575 397,585 400,580 404,605 268,638 268,640 363,642 218,708 487,822 515,852 508,858 512,865 505,870 515,875 503,875 510,860 681,917 330,925 325,930 335,935 330,940 318,940 345,940 354,942 340,950 345,960 335,965 325,960 310,965 333,971 289,971 281,996 300,1000 290,1010 281,1020 304,1013 297,1014',
C: '549,96 545,107 565,108 549,119 656,82 658,84 622,119 611,120 610,135 612,145 608,148 615,150 625,155 632,155 640,160 645,152 652,148 650,145 652,138 622,158 638,162 363,280 363,272 359,264 383,359 403,359 400,365 606,359 690,290 697,283 683,300 668,305 675,310 690,308 700,315 708,300 705,325 714,323 700,330 672,318 664,330 705,456 734,486 497,455 498,461 495,467 680,600 684,605 681,600 678,604 682,610 644,630 660,625 668,635 670,645 660,640 665,630 640,678 597,678 598,683 610,684 983,244 985,246 1221,390 1237,653 1225,665 1240,665 1233,672 1250,678 1267,665 1271,684 1221,690 1229,702 1056,720 1031,750'
};
const homes = { B: '392,714 528,708 400,1014', C: '540,276 1015,360 1415,768' };
const layer = document.getElementById('points');
function dots(set, fill) {
  for (const s in set) for (const [x, y] of place(s, set[s])) {
    const c = document.createElementNS(NS, 'circle');
    c.setAttribute('cx', x); c.setAttribute('cy', y); c.setAttribute('r', 4.4); c.setAttribute('fill', fill);
    layer.appendChild(c);
  }
}
dots(hospitals, '#f7a12d');
dots(homes, '#add8e6');
</script>
</body>
</html>
